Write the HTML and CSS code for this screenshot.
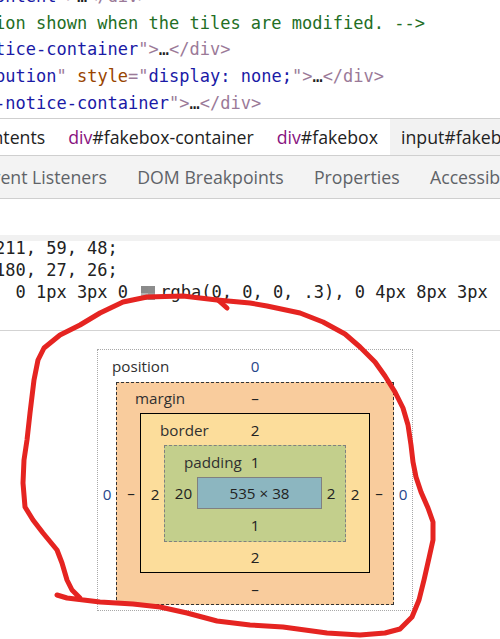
FILE: index.html
```html
<!DOCTYPE html>
<html>
<head>
<meta charset="utf-8">
<link rel="stylesheet" href="styles.css">
</head>
<body>
<div class="dom-pane">
<pre class="code"><span class="av">ontent</span><span class="tg">"&gt;</span>…<span class="tg">&lt;/div&gt;</span>
<span class="cm">ion shown when the tiles are modified. --&gt;</span>
<span class="av">tice-container</span><span class="tg">"&gt;</span>…<span class="tg">&lt;/div&gt;</span>
<span class="av">bution</span><span class="tg">"</span> <span class="an">style</span><span class="tg">="</span><span class="av">display: none;</span><span class="tg">"&gt;</span>…<span class="tg">&lt;/div&gt;</span>
<span class="av">-notice-container</span><span class="tg">"&gt;</span>…<span class="tg">&lt;/div&gt;</span></pre>
</div>

<div class="crumbs">
  <div class="crumb first">ntents</div>
  <div class="crumb"><span class="tag">div</span>#fakebox-container</div>
  <div class="crumb"><span class="tag">div</span>#fakebox</div>
  <div class="crumb active">input#fakebox-input</div>
</div>

<div class="tabs">
  <div class="tab first">rent Listeners</div>
  <div class="tab">DOM Breakpoints</div>
  <div class="tab">Properties</div>
  <div class="tab">Accessibility</div>
</div>

<div class="spacer"></div>
<div class="strip"></div>

<div class="styles">
<pre class="code small">211, 59, 48;
180, 27, 26;
  0 1px 3px 0 <span class="swatch"></span>rgba(0, 0, 0, .3), 0 4px 8px 3px <span class="swatch"></span>rgba(0, 0, 0, .15);</pre>
</div>

<div class="metrics">
  <div class="bm pos">
    <div class="bm-top"><span class="bm-label">position</span><span class="v">0</span><span></span></div>
    <div class="side v pv">0</div>
    <div class="bm margin">
      <div class="bm-top"><span class="bm-label">margin</span><span class="v">–</span><span></span></div>
      <div class="side left v">–</div>
      <div class="bm border">
        <div class="bm-top"><span class="bm-label">border</span><span class="v">2</span><span></span></div>
        <div class="side left v">2</div>
        <div class="bm padding">
          <div class="bm-top"><span class="bm-label">padding</span><span class="v">1</span><span></span></div>
          <div class="side left v">20</div>
          <div class="content">535 × 38</div>
          <div class="side right v">2</div>
          <div class="bm-bottom v">1</div>
        </div>
        <div class="side right v">2</div>
        <div class="bm-bottom v">2</div>
      </div>
      <div class="side right v">–</div>
      <div class="bm-bottom v">–</div>
    </div>
    <div class="side v pv">0</div>
    <div class="bm-bottom"></div>
  </div>
</div>

<svg class="scribble" width="500" height="639" viewBox="0 0 500 639">
  <path d="M227,308 L218,300" />
  <path d="M80,598 L72,590 L67,580 L62,563 L57,550 L43,533 L33,520 L25,507 L23,483 L24,460 L27,440 L30,413 L34,380 L38,360 L44,348 L60,335 L80,325 L100,313 L123,302 L147,297 L183,296 L217,300 L250,303 L267,306 L300,313 L323,322 L345,334 L360,347 L375,362 L385,376 L395,392 L403,408 L408,425 L411,445 L413,462 L416,477 L421,492 L428,508 L433,522 L433,540 L429,558 L424,580 L419,600 L412,617 L400,629 L385,633 L360,635 L327,633 L283,627 L250,625 L217,621 L187,613 L160,607 L133,604 L100,602 L67,598 L57,595" />
</svg>
</body>
</html>
```
FILE: styles.css
```css
body {
  margin: 0;
  width: 500px;
  height: 639px;
  overflow: hidden;
  position: relative;
  background: #fff;
  font-family: "Open Sans", "Noto Sans", sans-serif;
  color: #222;
}

.dom-pane {
  height: 118px;
  overflow: hidden;
  border-bottom: 1px solid #cfcfcf;
}

.code {
  margin: -17px 0 0 -5px;
  font-family: "DejaVu Sans Mono", monospace;
  font-size: 17px;
  line-height: 26.7px;
  white-space: pre;
  color: #222;
}

.code.small {
  margin-top: -4px;
  line-height: 22px;
}

.cm { color: #236e25; }
.av { color: #1a1aa6; }
.an { color: #994500; }
.tg { color: #9b7a98; }

.crumbs {
  height: 36px;
  display: flex;
  white-space: nowrap;
  overflow: hidden;
  border-bottom: 1px solid #cfcfcf;
}

.crumb {
  display: flex;
  align-items: center;
  padding: 0 11.5px;
  font-size: 17.7px;
  color: #222;
  flex: none;
}

.crumb.first {
  margin-left: -19px;
}

.crumb.active {
  background: #f2f2f2;
}

.tag { color: #881280; }

.tabs {
  height: 42px;
  display: flex;
  background: #f3f3f3;
  border-bottom: 1px solid #cfcfcf;
  white-space: nowrap;
  overflow: hidden;
}

.tab {
  display: flex;
  align-items: center;
  padding: 0 15.2px;
  font-size: 17.7px;
  color: #5f6368;
  flex: none;
}

.tab.first {
  margin-left: -22px;
}

.spacer { height: 36px; }

.strip {
  height: 6px;
  background: #f1f1f1;
}

.styles {
  height: 89px;
  overflow: hidden;
  border-bottom: 1px solid #d3d3d3;
}

.swatch {
  display: inline-block;
  width: 14px;
  height: 14px;
  margin: 0 5px 0 3px;
  vertical-align: -2px;
  background: conic-gradient(#8c8c8c 0 25%, #9a9a9a 0 50%, #b3b3b3 0 75%, #8a8a8a 0);
}

.metrics {
  padding: 18px 0 0 97px;
  font-size: 15.2px;
}

.bm {
  display: grid;
  grid-template-columns: var(--l) auto var(--r);
  grid-template-rows: var(--t) auto var(--b);
}

.bm-top {
  grid-column: 1 / -1;
  display: grid;
  grid-template-columns: 1fr auto 1fr;
  align-items: center;
}

.bm-bottom {
  grid-column: 1 / -1;
  display: flex;
  justify-content: center;
  align-items: center;
}

.side {
  display: flex;
  align-items: center;
  justify-content: center;
}

.side.left { padding-left: 5px; }
.side.right { padding-right: 5px; }

.bm-label {
  justify-self: start;
  color: #303030;
}

.v { color: #222; }
.pv { color: #26458a; }

.pos {
  width: max-content;
  --l: 18px; --r: 18px; --t: 32px; --b: 5px;
  border: 1px dotted #a8a8a8;
}
.pos > .bm-top .bm-label { padding-left: 14px; }
.pos > .bm-top .v { color: #26458a; }

.margin {
  --l: 23px; --r: 23px; --t: 30px; --b: 31px;
  background: #f9cc9d;
  border: 1px dashed #333;
}
.margin > .bm-top .bm-label { padding-left: 18px; }

.border {
  --l: 23px; --r: 23px; --t: 31px; --b: 30px;
  background: #fcdd9b;
  border: 1px solid #000;
}
.border > .bm-top .bm-label { padding-left: 19px; }

.padding {
  --l: 32px; --r: 23px; --t: 31px; --b: 32px;
  background: #c3cf8c;
  border: 1px dashed #808080;
}
.padding > .bm-top .bm-label { padding-left: 19px; }

.content {
  width: 123px;
  height: 30px;
  background: #8cb6c0;
  border: 1px solid #808080;
  display: flex;
  align-items: center;
  justify-content: center;
  color: #222;
}

.scribble {
  position: absolute;
  left: 0;
  top: 0;
  pointer-events: none;
}

.scribble path {
  fill: none;
  stroke: #e52421;
  stroke-width: 5;
  stroke-linecap: round;
  stroke-linejoin: round;
}
```
